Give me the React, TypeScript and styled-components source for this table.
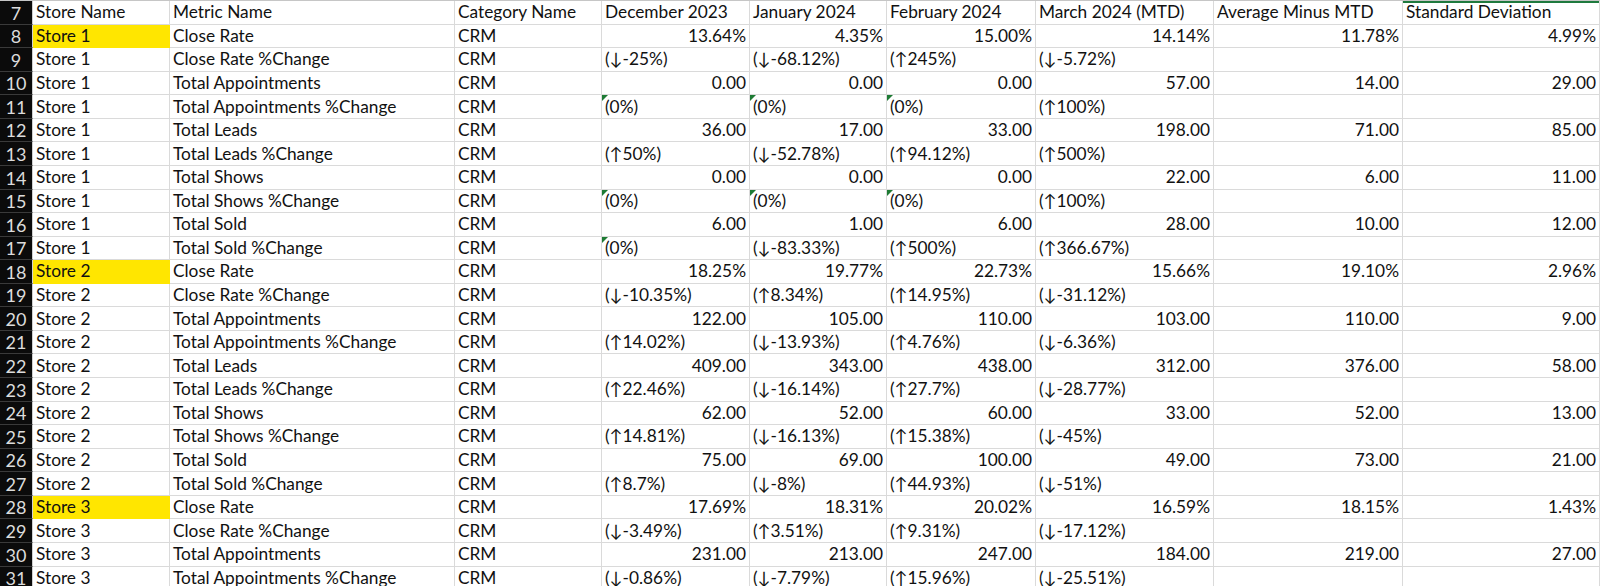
import React from "react";
import styled, { createGlobalStyle } from "styled-components";

type Row = {
  n: number;
  store: string;
  metric: string;
  vals: string[];
  mark?: boolean;
};

const COLS = [33, 137, 285, 147, 148, 137, 149, 178, 189, 197];

const headers = [
  "Store Name",
  "Metric Name",
  "Category Name",
  "December 2023",
  "January 2024",
  "February 2024",
  "March 2024 (MTD)",
  "Average Minus MTD",
  "Standard Deviation",
];

const rows: Row[] = [
  { n: 8, store: "Store 1", metric: "Close Rate", vals: ["13.64%", "4.35%", "15.00%", "14.14%", "11.78%", "4.99%"], mark: true },
  { n: 9, store: "Store 1", metric: "Close Rate %Change", vals: ["(↓-25%)", "(↓-68.12%)", "(↑245%)", "(↓-5.72%)", "", ""] },
  { n: 10, store: "Store 1", metric: "Total Appointments", vals: ["0.00", "0.00", "0.00", "57.00", "14.00", "29.00"] },
  { n: 11, store: "Store 1", metric: "Total Appointments %Change", vals: ["(0%)", "(0%)", "(0%)", "(↑100%)", "", ""] },
  { n: 12, store: "Store 1", metric: "Total Leads", vals: ["36.00", "17.00", "33.00", "198.00", "71.00", "85.00"] },
  { n: 13, store: "Store 1", metric: "Total Leads %Change", vals: ["(↑50%)", "(↓-52.78%)", "(↑94.12%)", "(↑500%)", "", ""] },
  { n: 14, store: "Store 1", metric: "Total Shows", vals: ["0.00", "0.00", "0.00", "22.00", "6.00", "11.00"] },
  { n: 15, store: "Store 1", metric: "Total Shows %Change", vals: ["(0%)", "(0%)", "(0%)", "(↑100%)", "", ""] },
  { n: 16, store: "Store 1", metric: "Total Sold", vals: ["6.00", "1.00", "6.00", "28.00", "10.00", "12.00"] },
  { n: 17, store: "Store 1", metric: "Total Sold %Change", vals: ["(0%)", "(↓-83.33%)", "(↑500%)", "(↑366.67%)", "", ""] },
  { n: 18, store: "Store 2", metric: "Close Rate", vals: ["18.25%", "19.77%", "22.73%", "15.66%", "19.10%", "2.96%"], mark: true },
  { n: 19, store: "Store 2", metric: "Close Rate %Change", vals: ["(↓-10.35%)", "(↑8.34%)", "(↑14.95%)", "(↓-31.12%)", "", ""] },
  { n: 20, store: "Store 2", metric: "Total Appointments", vals: ["122.00", "105.00", "110.00", "103.00", "110.00", "9.00"] },
  { n: 21, store: "Store 2", metric: "Total Appointments %Change", vals: ["(↑14.02%)", "(↓-13.93%)", "(↑4.76%)", "(↓-6.36%)", "", ""] },
  { n: 22, store: "Store 2", metric: "Total Leads", vals: ["409.00", "343.00", "438.00", "312.00", "376.00", "58.00"] },
  { n: 23, store: "Store 2", metric: "Total Leads %Change", vals: ["(↑22.46%)", "(↓-16.14%)", "(↑27.7%)", "(↓-28.77%)", "", ""] },
  { n: 24, store: "Store 2", metric: "Total Shows", vals: ["62.00", "52.00", "60.00", "33.00", "52.00", "13.00"] },
  { n: 25, store: "Store 2", metric: "Total Shows %Change", vals: ["(↑14.81%)", "(↓-16.13%)", "(↑15.38%)", "(↓-45%)", "", ""] },
  { n: 26, store: "Store 2", metric: "Total Sold", vals: ["75.00", "69.00", "100.00", "49.00", "73.00", "21.00"] },
  { n: 27, store: "Store 2", metric: "Total Sold %Change", vals: ["(↑8.7%)", "(↓-8%)", "(↑44.93%)", "(↓-51%)", "", ""] },
  { n: 28, store: "Store 3", metric: "Close Rate", vals: ["17.69%", "18.31%", "20.02%", "16.59%", "18.15%", "1.43%"], mark: true },
  { n: 29, store: "Store 3", metric: "Close Rate %Change", vals: ["(↓-3.49%)", "(↑3.51%)", "(↑9.31%)", "(↓-17.12%)", "", ""] },
  { n: 30, store: "Store 3", metric: "Total Appointments", vals: ["231.00", "213.00", "247.00", "184.00", "219.00", "27.00"] },
  { n: 31, store: "Store 3", metric: "Total Appointments %Change", vals: ["(↓-0.86%)", "(↓-7.79%)", "(↑15.96%)", "(↓-25.51%)", "", ""] },
];

const GlobalStyle = createGlobalStyle`
  html, body {
    margin: 0;
    padding: 0;
    background: #ffffff;
    overflow: hidden;
  }
`;

const Sheet = styled.div`
  display: grid;
  grid-template-columns: ${COLS.map((c) => `${c}px`).join(" ")};
  grid-auto-rows: 23.57px;
  width: 1600px;
  height: 586px;
  overflow: hidden;
  font-family: Lato, "Open Sans", sans-serif;
  font-size: 17.3px;
  color: #111;
  border-top: 1px solid #c6c6c6;
`;

const RowHead = styled.div`
  background: #0b0b0b;
  color: #dcdcdc;
  border-bottom: 1px solid #3a3a3a;
  border-right: 1px solid #d0d0d0;
  display: flex;
  align-items: flex-end;
  justify-content: center;
  padding-bottom: 2px;
  box-sizing: border-box;
  line-height: 1;
  font-size: 18px;
`;

const Cell = styled.div<{ $right?: boolean; $mark?: boolean; $top?: boolean }>`
  position: relative;
  box-sizing: border-box;
  border-right: 1px solid ${(p) => (p.$mark ? "#ffe600" : "#dadada")};
  border-bottom: 1px solid ${(p) => (p.$mark ? "#ffe600" : "#dadada")};
  background: ${(p) => (p.$mark ? "#ffe600" : "transparent")};
  display: flex;
  align-items: flex-end;
  justify-content: ${(p) => (p.$right ? "flex-end" : "flex-start")};
  padding: 0 3px 3px 3px;
  white-space: nowrap;
  overflow: visible;
  line-height: 1;
  box-shadow: ${(p) => (p.$top ? "inset 0 2px 0 #1f7a3e" : "none")};
`;

const Flag = styled.span`
  position: absolute;
  top: 0;
  left: 0;
  width: 0;
  height: 0;
  border-top: 6px solid #1e7b34;
  border-right: 6px solid transparent;
`;

const isNumber = (v: string) => /^[0-9.]+%?$/.test(v);

const App: React.FC = () => {
  return (
    <>
      <GlobalStyle />
      <Sheet>
        <RowHead>7</RowHead>
        {headers.map((h, i) => (
          <Cell key={h} $top={i === 8}>
            {h}
          </Cell>
        ))}
        {rows.map((r) => (
          <React.Fragment key={r.n}>
            <RowHead>{r.n}</RowHead>
            <Cell $mark={r.mark}>{r.store}</Cell>
            <Cell>{r.metric}</Cell>
            <Cell>CRM</Cell>
            {r.vals.map((v, i) => (
              <Cell key={i} $right={isNumber(v)}>
                {v === "(0%)" && <Flag />}
                {v}
              </Cell>
            ))}
          </React.Fragment>
        ))}
      </Sheet>
    </>
  );
};

export default App;
